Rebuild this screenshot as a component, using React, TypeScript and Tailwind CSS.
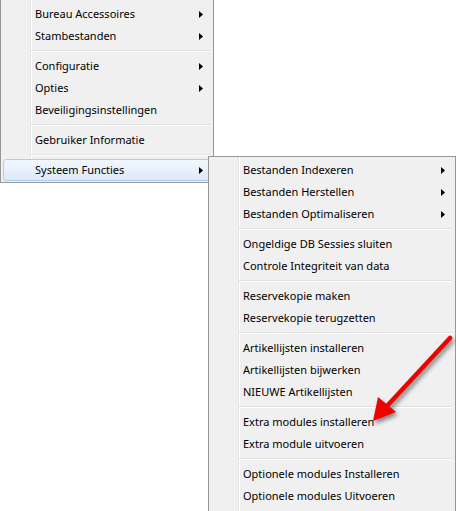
import clsx from "clsx";

type Entry = { label: string; sub?: boolean; active?: boolean } | "sep";

const mainMenu: Entry[] = [
    { label: "Bureau Accessoires", sub: true },
    { label: "Stambestanden", sub: true },
    "sep",
    { label: "Configuratie", sub: true },
    { label: "Opties", sub: true },
    { label: "Beveiligingsinstellingen" },
    "sep",
    { label: "Gebruiker Informatie" },
    "sep",
    { label: "Systeem Functies", sub: true, active: true },
];

const subMenu: Entry[] = [
    { label: "Bestanden Indexeren", sub: true },
    { label: "Bestanden Herstellen", sub: true },
    { label: "Bestanden Optimaliseren", sub: true },
    "sep",
    { label: "Ongeldige DB Sessies sluiten" },
    { label: "Controle Integriteit van data" },
    "sep",
    { label: "Reservekopie maken" },
    { label: "Reservekopie terugzetten" },
    "sep",
    { label: "Artikellijsten installeren" },
    { label: "Artikellijsten bijwerken" },
    { label: "NIEUWE Artikellijsten" },
    "sep",
    { label: "Extra modules installeren" },
    { label: "Extra module uitvoeren" },
    "sep",
    { label: "Optionele modules Installeren" },
    { label: "Optionele modules Uitvoeren" },
];

function MenuRows({ entries }: { entries: Entry[] }) {
    return (
        <>
            {entries.map((e, i) =>
                e === "sep" ? (
                    <div key={i} className="h-[8px] flex flex-col justify-center ml-[30px] mr-[2px]">
                        <div className="h-px bg-[#e0e0e0]"></div>
                        <div className="h-px bg-white"></div>
                    </div>
                ) : (
                    <div
                        key={i}
                        className={clsx(
                            "mx-[2px] h-[22px] flex items-center border rounded-[3px] pl-[31px] pr-[7px]",
                            e.active
                                ? "border-[#aecbf0] bg-gradient-to-b from-[#f3f8fe] to-[#dde9f8]"
                                : "border-transparent"
                        )}
                    >
                        <span className="flex-1 whitespace-nowrap">{e.label}</span>
                        {e.sub && (
                            <svg width="4" height="7" viewBox="0 0 4 7">
                                <polygon points="0,0 4,3.5 0,7" fill="#000" />
                            </svg>
                        )}
                    </div>
                )
            )}
        </>
    );
}

const App: React.FC = () => {
    return (
        <div className="relative w-[456px] h-[511px] overflow-hidden bg-white text-[11px] text-black font-['Segoe_UI','Noto_Sans',sans-serif]">
            <div className="w-[214px] pt-[3px] pb-[1px] border-x border-b border-[#979797] bg-[#f0f0f0] bg-[linear-gradient(to_right,transparent_29px,#e2e3e3_29px,#e2e3e3_30px,#ffffff_30px,#ffffff_31px,transparent_31px)]">
                <MenuRows entries={mainMenu} />
            </div>

            <div className="absolute left-[208px] top-[156px] w-[248px] pt-[2px] pb-[6px] border border-[#979797] bg-[#f0f0f0] bg-[linear-gradient(to_right,transparent_29px,#e2e3e3_29px,#e2e3e3_30px,#ffffff_30px,#ffffff_31px,transparent_31px)]">
                <MenuRows entries={subMenu} />
            </div>

            {/* red pointer arrow */}
            <svg
                className="absolute left-[355px] top-[330px] drop-shadow-[2px_3px_2px_rgba(0,0,0,0.45)]"
                width="101"
                height="100"
                viewBox="0 0 101 100"
            >
                <line x1="95" y1="8" x2="32" y2="76" stroke="#f20000" strokeWidth="4.5" strokeLinecap="round" />
                <polygon points="18,91 23,67 41,82" fill="#f20000" />
            </svg>
        </div>
    );
};

export default App;
